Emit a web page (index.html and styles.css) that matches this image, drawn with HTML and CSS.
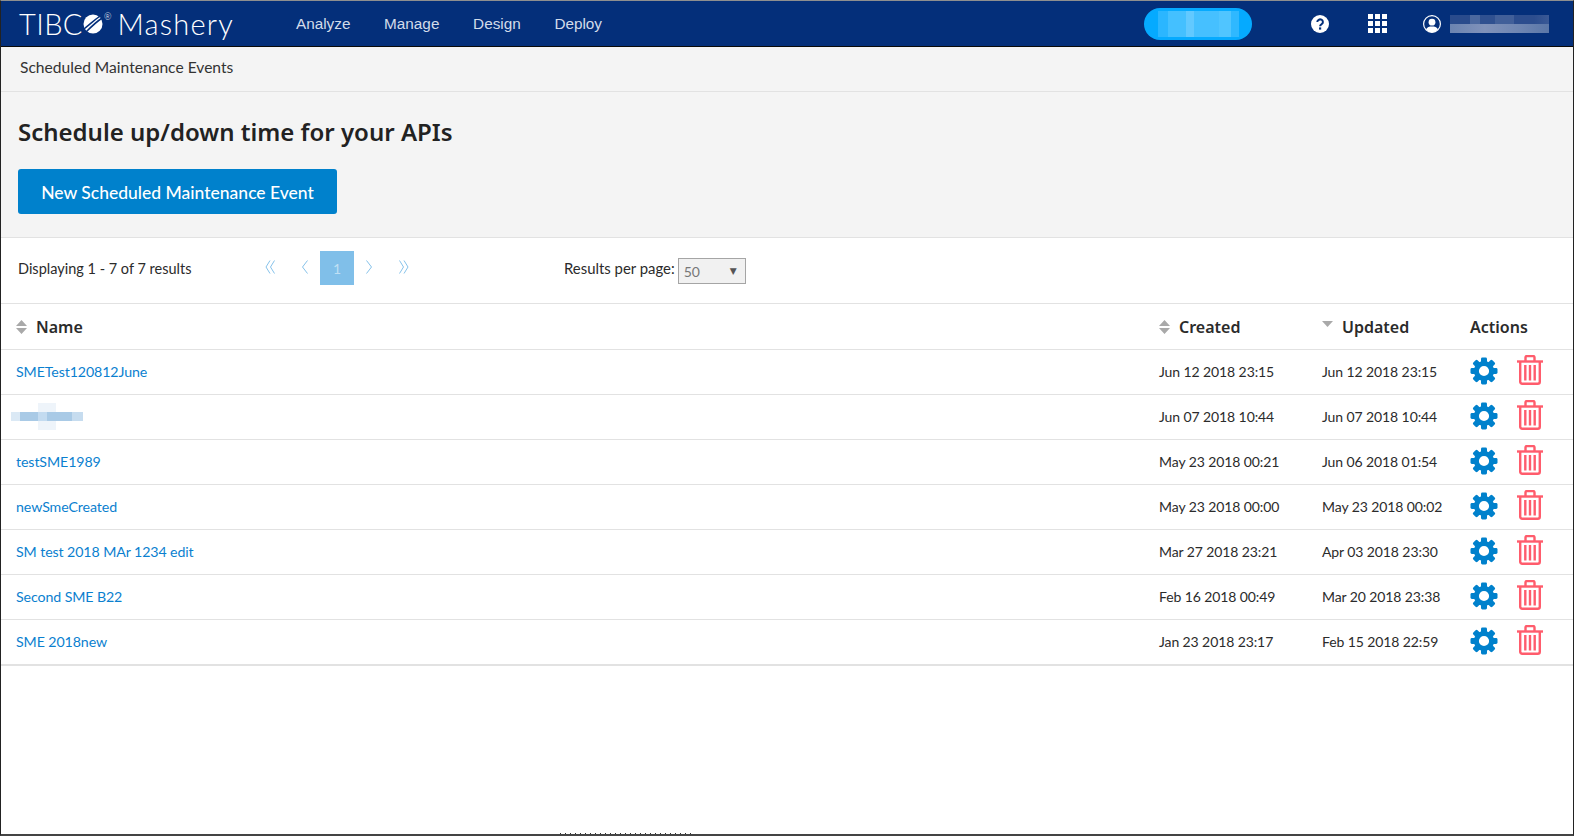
FILE: index.html
```html
<!DOCTYPE html>
<html lang="en">
<head>
<meta charset="utf-8">
<title>Scheduled Maintenance Events</title>
<link rel="stylesheet" href="styles.css">
</head>
<body>
<svg class="sprite" width="0" height="0" aria-hidden="true">
  <symbol id="gear" viewBox="0 0 28 28">
    <g fill="#0081cc">
      <rect x="11" y="0.5" width="6" height="27" rx="1.4"/>
      <rect x="11" y="0.5" width="6" height="27" rx="1.4" transform="rotate(45 14 14)"/>
      <rect x="11" y="0.5" width="6" height="27" rx="1.4" transform="rotate(90 14 14)"/>
      <rect x="11" y="0.5" width="6" height="27" rx="1.4" transform="rotate(135 14 14)"/>
    </g>
    <circle cx="14" cy="14" r="7.6" fill="#fff" stroke="#0081cc" stroke-width="5"/>
  </symbol>
  <symbol id="trash" viewBox="0 0 26 30">
    <g fill="none" stroke="#ff5c6c" stroke-width="2.4">
      <path d="M0 6.5H26"/>
      <path d="M8.5 6V2.5a1.5 1.5 0 0 1 1.5-1.5h6a1.5 1.5 0 0 1 1.5 1.5V6"/>
      <path d="M3.2 7V26.8a2 2 0 0 0 2 2h15.6a2 2 0 0 0 2-2V7"/>
      <path d="M8.3 10V25.5M13 10V25.5M17.7 10V25.5"/>
    </g>
  </symbol>
  <symbol id="sort" viewBox="0 0 11 14">
    <path d="M5.5 0L11 6H0Z M0 8H11L5.5 14Z" fill="#a9a9a9"/>
  </symbol>
</svg>
<div class="frame">
  <header class="topbar">
    <div class="logo"><span class="logo-tibco">TIBC</span><svg class="logo-ball" viewBox="0 0 20 20" width="20" height="20" aria-hidden="true"><circle cx="10" cy="10" r="9.5" fill="#fff"/><path d="M1 15C6 11 11 6.5 17 2.2M3 18C8 13 13 8 18.5 4.5" fill="none" stroke="#042f7a" stroke-width="1.5"/></svg><sup class="logo-reg">®</sup><span class="logo-name">Mashery</span></div>
    <nav class="mainnav">
      <a>Analyze</a>
      <a>Manage</a>
      <a>Design</a>
      <a>Deploy</a>
    </nav>
    <div class="pill"><div class="pill-blur"></div></div>
    <svg class="help" viewBox="0 0 18 18" width="18" height="18" aria-hidden="true"><circle cx="9" cy="9" r="9" fill="#fff"/><path d="M6.3 7a2.8 2.6 0 1 1 4.3 2.2c-1 .7-1.5 1-1.5 2.1" fill="none" stroke="#042f7a" stroke-width="2"/><rect x="8" y="12.4" width="2.2" height="2.2" fill="#042f7a"/></svg>
    <div class="apps"><i></i><i></i><i></i><i></i><i></i><i></i><i></i><i></i><i></i></div>
    <svg class="usericon" viewBox="0 0 18 18" width="18" height="18" aria-hidden="true"><circle cx="9" cy="9" r="8.4" fill="none" stroke="#fff" stroke-width="1.2"/><circle cx="9" cy="7.2" r="3.4" fill="#fff"/><path d="M3 14.5C4 11.8 6.5 11.4 9 11.4s5 .4 6 3.1a8 8 0 0 1-12 0Z" fill="#fff"/></svg>
    <div class="userblur"></div>
  </header>
  <div class="crumb">Scheduled Maintenance Events</div>
  <section class="hero">
    <h1>Schedule up/down time for your APIs</h1>
    <button class="primary" type="button">New Scheduled Maintenance Event</button>
  </section>
  <section class="pager">
    <div class="count">Displaying 1 - 7 of 7 results</div>
    <div class="pages">
      <svg class="chev" viewBox="0 0 10 14" width="10" height="14" aria-hidden="true"><path d="M5 .5L1 7l4 6.500M9.500 .5L5.500 7l4 6.500"/></svg>
      <svg class="chev" viewBox="0 0 10 14" width="10" height="14" aria-hidden="true"><path d="M7.500 .5L2.500 7l5 6.500"/></svg>
      <span class="page-cur">1</span>
      <svg class="chev" viewBox="0 0 10 14" width="10" height="14" aria-hidden="true"><path d="M2.500 .5L7.500 7l-5 6.500"/></svg>
      <svg class="chev" viewBox="0 0 10 14" width="10" height="14" aria-hidden="true"><path d="M.5 .5L4.500 7l-4 6.500M5 .5L9 7l-4 6.500"/></svg>
    </div>
    <div class="perpage">Results per page:<span class="select"><span>50</span><b>▼</b></span></div>
  </section>
  <div class="table">
    <div class="row head">
      <div class="c-name"><svg class="sorticon" aria-hidden="true"><use href="#sort"/></svg>Name</div>
      <div class="c-date"><svg class="sorticon" aria-hidden="true"><use href="#sort"/></svg>Created</div>
      <div class="c-date"><svg class="sorticon sort-active" viewBox="0 0 11 6" aria-hidden="true"><path d="M0 0H11L5.5 6Z" fill="#a9a9a9"/></svg>Updated</div>
      <div class="c-act">Actions</div>
    </div>
    <div class="row">
      <div class="c-name"><a>SMETest120812June</a></div>
      <div class="c-date"><span>Jun 12 2018 23:15</span></div><div class="c-date"><span>Jun 12 2018 23:15</span></div>
      <div class="c-act"><svg class="gear" aria-hidden="true"><use href="#gear"/></svg><svg class="trash" aria-hidden="true"><use href="#trash"/></svg></div>
    </div>
    <div class="row">
      <div class="c-name"><div class="nameblur"></div></div>
      <div class="c-date"><span>Jun 07 2018 10:44</span></div><div class="c-date"><span>Jun 07 2018 10:44</span></div>
      <div class="c-act"><svg class="gear" aria-hidden="true"><use href="#gear"/></svg><svg class="trash" aria-hidden="true"><use href="#trash"/></svg></div>
    </div>
    <div class="row">
      <div class="c-name"><a>testSME1989</a></div>
      <div class="c-date"><span>May 23 2018 00:21</span></div><div class="c-date"><span>Jun 06 2018 01:54</span></div>
      <div class="c-act"><svg class="gear" aria-hidden="true"><use href="#gear"/></svg><svg class="trash" aria-hidden="true"><use href="#trash"/></svg></div>
    </div>
    <div class="row">
      <div class="c-name"><a>newSmeCreated</a></div>
      <div class="c-date"><span>May 23 2018 00:00</span></div><div class="c-date"><span>May 23 2018 00:02</span></div>
      <div class="c-act"><svg class="gear" aria-hidden="true"><use href="#gear"/></svg><svg class="trash" aria-hidden="true"><use href="#trash"/></svg></div>
    </div>
    <div class="row">
      <div class="c-name"><a>SM test 2018 MAr 1234 edit</a></div>
      <div class="c-date"><span>Mar 27 2018 23:21</span></div><div class="c-date"><span>Apr 03 2018 23:30</span></div>
      <div class="c-act"><svg class="gear" aria-hidden="true"><use href="#gear"/></svg><svg class="trash" aria-hidden="true"><use href="#trash"/></svg></div>
    </div>
    <div class="row">
      <div class="c-name"><a>Second SME B22</a></div>
      <div class="c-date"><span>Feb 16 2018 00:49</span></div><div class="c-date"><span>Mar 20 2018 23:38</span></div>
      <div class="c-act"><svg class="gear" aria-hidden="true"><use href="#gear"/></svg><svg class="trash" aria-hidden="true"><use href="#trash"/></svg></div>
    </div>
    <div class="row last">
      <div class="c-name"><a>SME 2018new</a></div>
      <div class="c-date"><span>Jan 23 2018 23:17</span></div><div class="c-date"><span>Feb 15 2018 22:59</span></div>
      <div class="c-act"><svg class="gear" aria-hidden="true"><use href="#gear"/></svg><svg class="trash" aria-hidden="true"><use href="#trash"/></svg></div>
    </div>
  </div>
</div>
</body>
</html>
```
FILE: styles.css
```css
* { box-sizing: border-box; }
html, body { margin: 0; padding: 0; height: 100%; background: #fff; overflow: hidden; }
body { font-family: "Lato", "Noto Sans", sans-serif; color: #2b2b2b; font-size: 15px; }
.sprite { position: absolute; }
.frame {
  position: relative;
  height: 836px;
  border-top: 1px solid #8f8f8f;
  border-left: 1px solid #222;
  border-right: 1px solid #222;
  border-bottom: 2px solid #444;
  overflow: hidden;
}
.frame::after {
  content: "";
  position: absolute;
  left: 559px;
  bottom: 0;
  width: 134px;
  height: 1px;
  background: repeating-linear-gradient(90deg, #333 0 1px, #fff 1px 5px);
}
.topbar {
  height: 46px;
  background: #042f7a;
  border-bottom: 1px solid #0a0a0a;
  display: flex;
  align-items: center;
  color: #fff;
}
.logo {
  width: 295px;
  padding-left: 18px;
  display: flex;
  align-items: center;
  font-family: "Lato", sans-serif;
  font-weight: 300;
  font-size: 29px;
  letter-spacing: 1.2px;
  color: #fff;
  flex: none;
}
.logo-tibco { letter-spacing: 0.4px; }
.logo-ball { margin-left: 0; flex: none; }
.logo-reg { font-size: 9px; letter-spacing: 0; align-self: flex-start; margin: 6px 0 0 1px; line-height: 1; }
.logo-name { margin-left: 6px; }
.mainnav {
  display: flex;
  gap: 33.7px;
  font-family: "Liberation Sans", Arial, sans-serif;
  font-size: 15.3px;
  color: #d3dcea;
  flex: none;
}
.pill {
  margin-left: 542px;
  width: 108px;
  height: 32px;
  border-radius: 16px;
  background: #05aaff;
  display: flex;
  align-items: center;
  justify-content: center;
  flex: none;
}
.pill-blur {
  width: 81px;
  height: 26px;
  background: linear-gradient(90deg, #2bb6ff 0 12%, #44c0ff 12% 35%, #62c9ff 35% 45%, #46c0ff 45% 75%, #50c5ff 75% 90%, #2fb8ff 90%);
}
.help { margin-left: 59px; flex: none; }
.apps {
  margin-left: 39px;
  width: 19px;
  height: 19px;
  display: grid;
  grid-template-columns: repeat(3, 5px);
  grid-template-rows: repeat(3, 5px);
  gap: 2px;
  flex: none;
}
.apps i { background: #fff; }
.usericon { margin-left: 36px; flex: none; }
.userblur {
  margin-left: 9px;
  width: 99px;
  height: 18px;
  background:
    linear-gradient(90deg, #2a4b8c 0 20%, #4b689f 20% 30%, #2f5090 30% 45%, #415f99 45% 65%, #2c4d8e 65% 85%, #3a5996),
    linear-gradient(90deg, #6c84b1, #8092ba 35%, #6f86b2 70%, #5b77a8);
  background-size: 100% 50%;
  background-position: 0 0, 0 100%;
  background-repeat: no-repeat;
  flex: none;
}
.crumb {
  height: 45px;
  background: #f4f4f4;
  border-bottom: 1px solid #e2e2e2;
  padding-left: 19px;
  line-height: 41px;
  font-size: 15.6px;
  color: #333;
}
.hero {
  height: 146px;
  background: #f4f4f4;
  border-bottom: 1px solid #e2e2e2;
  padding: 22px 0 0 17px;
}
.hero h1 {
  margin: 0;
  font-family: "Noto Sans", sans-serif;
  font-size: 24px;
  line-height: 36px;
  font-weight: 600;
  color: #222;
}
.primary {
  margin-top: 19px;
  display: block;
  width: 319px;
  height: 45px;
  padding: 2px 0 0;
  border: 0;
  border-radius: 3px;
  background: #0081cc;
  color: #fff;
  font: 500 17.5px "Lato", sans-serif;
}
.pager {
  height: 66px;
  border-bottom: 1px solid #e2e2e2;
  display: flex;
  align-items: center;
  padding: 0 0 5px 17px;
  font-size: 14.5px;
}
.count { width: 247px; flex: none; }
.pages { display: flex; align-items: center; gap: 25px; width: 299px; flex: none; }
.chev { fill: none; stroke: #86c2ea; stroke-width: 1; margin-bottom: 3px; flex: none; }
.page-cur {
  width: 34px;
  height: 34px;
  margin: 0 -15px;
  background: #80bfe9;
  color: #bfdff4;
  display: flex;
  align-items: center;
  justify-content: center;
  font-size: 14px;
}
.perpage { display: flex; align-items: center; gap: 3px; font-size: 14.9px; }
.select {
  width: 68px;
  height: 26px;
  margin-top: 6px;
  background: #f1f1f1;
  border: 1px solid #a5a5a5;
  display: flex;
  align-items: center;
  justify-content: space-between;
  padding: 0 8px 0 5px;
  color: #777;
  font-size: 14px;
}
.select b { font-size: 9px; color: #555; font-weight: 400; font-family: "DejaVu Sans", sans-serif; }
.row {
  height: 45px;
  display: grid;
  grid-template-columns: 1143px 163px 148px 1fr;
  align-items: center;
  border-bottom: 1px solid #e2e2e2;
  padding: 0 0 2px 15px;
  font-size: 14px;
  letter-spacing: -0.1px;
}
.row.head { height: 46px; padding-bottom: 0; font-family: "Noto Sans", sans-serif; font-size: 16px; font-weight: 600; color: #2b2b2b; letter-spacing: 0; }
.row.last { height: 46px; border-bottom: 2px solid #e2e2e2; }
.c-name { display: flex; align-items: center; }
.c-date { display: flex; align-items: center; }
.c-name a { color: #0b7fcf; font-size: 14.2px; }
.c-act { display: flex; align-items: center; }
.sorticon { width: 11px; height: 14px; margin-right: 9px; flex: none; }
.sort-active { height: 6px; margin-bottom: 5px; }
.gear { width: 28px; height: 28px; margin-bottom: 1px; flex: none; }
.trash { width: 26px; height: 30px; margin: 0 0 3px 19px; flex: none; }
.nameblur {
  width: 72px;
  height: 27px;
  margin-left: -5px;
  background:
    linear-gradient(90deg, #dbe9f5 0 12%, #a9cae6 12% 37%, #c3dbf0 37% 50%, #a9cae6 50% 85%, #c6dcef 85%) 0 50% / 100% 9px no-repeat,
    linear-gradient(90deg, #fff 0 37%, #eef4fa 37% 62%, #fff 62%);
}
```
